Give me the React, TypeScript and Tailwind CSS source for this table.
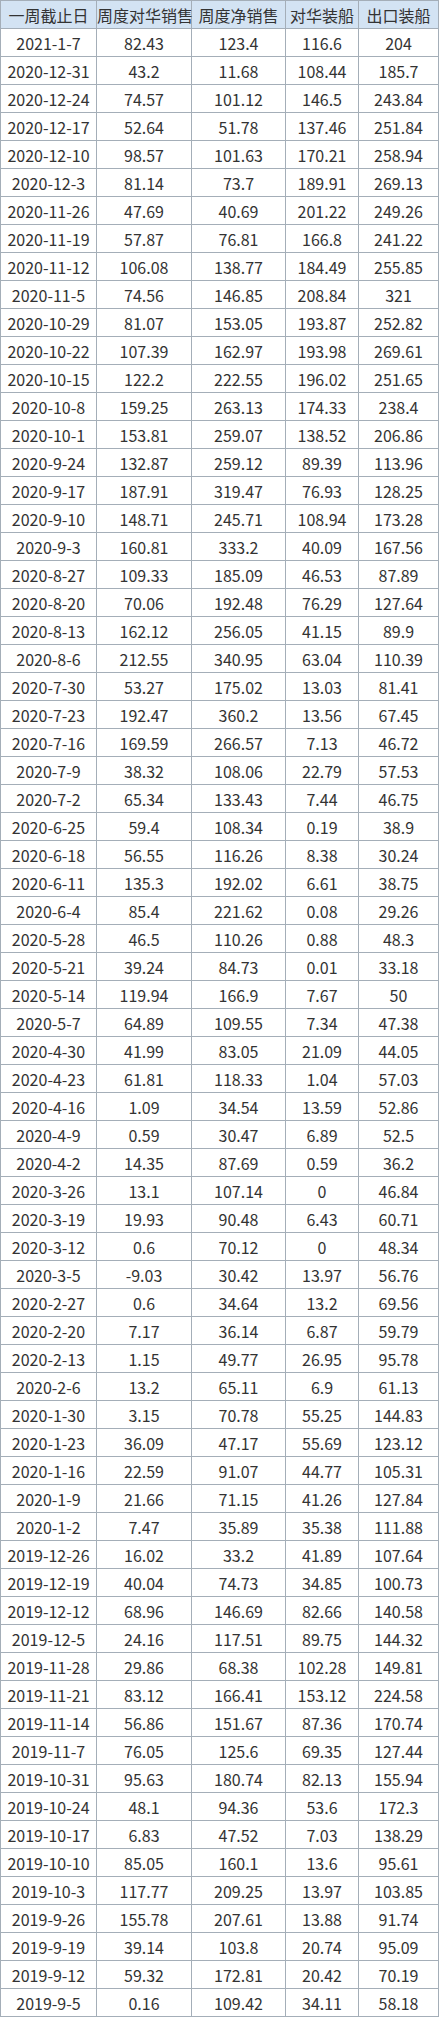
import React from "react";

const raw = `2021-1-7 82.43 123.4 116.6 204
2020-12-31 43.2 11.68 108.44 185.7
2020-12-24 74.57 101.12 146.5 243.84
2020-12-17 52.64 51.78 137.46 251.84
2020-12-10 98.57 101.63 170.21 258.94
2020-12-3 81.14 73.7 189.91 269.13
2020-11-26 47.69 40.69 201.22 249.26
2020-11-19 57.87 76.81 166.8 241.22
2020-11-12 106.08 138.77 184.49 255.85
2020-11-5 74.56 146.85 208.84 321
2020-10-29 81.07 153.05 193.87 252.82
2020-10-22 107.39 162.97 193.98 269.61
2020-10-15 122.2 222.55 196.02 251.65
2020-10-8 159.25 263.13 174.33 238.4
2020-10-1 153.81 259.07 138.52 206.86
2020-9-24 132.87 259.12 89.39 113.96
2020-9-17 187.91 319.47 76.93 128.25
2020-9-10 148.71 245.71 108.94 173.28
2020-9-3 160.81 333.2 40.09 167.56
2020-8-27 109.33 185.09 46.53 87.89
2020-8-20 70.06 192.48 76.29 127.64
2020-8-13 162.12 256.05 41.15 89.9
2020-8-6 212.55 340.95 63.04 110.39
2020-7-30 53.27 175.02 13.03 81.41
2020-7-23 192.47 360.2 13.56 67.45
2020-7-16 169.59 266.57 7.13 46.72
2020-7-9 38.32 108.06 22.79 57.53
2020-7-2 65.34 133.43 7.44 46.75
2020-6-25 59.4 108.34 0.19 38.9
2020-6-18 56.55 116.26 8.38 30.24
2020-6-11 135.3 192.02 6.61 38.75
2020-6-4 85.4 221.62 0.08 29.26
2020-5-28 46.5 110.26 0.88 48.3
2020-5-21 39.24 84.73 0.01 33.18
2020-5-14 119.94 166.9 7.67 50
2020-5-7 64.89 109.55 7.34 47.38
2020-4-30 41.99 83.05 21.09 44.05
2020-4-23 61.81 118.33 1.04 57.03
2020-4-16 1.09 34.54 13.59 52.86
2020-4-9 0.59 30.47 6.89 52.5
2020-4-2 14.35 87.69 0.59 36.2
2020-3-26 13.1 107.14 0 46.84
2020-3-19 19.93 90.48 6.43 60.71
2020-3-12 0.6 70.12 0 48.34
2020-3-5 -9.03 30.42 13.97 56.76
2020-2-27 0.6 34.64 13.2 69.56
2020-2-20 7.17 36.14 6.87 59.79
2020-2-13 1.15 49.77 26.95 95.78
2020-2-6 13.2 65.11 6.9 61.13
2020-1-30 3.15 70.78 55.25 144.83
2020-1-23 36.09 47.17 55.69 123.12
2020-1-16 22.59 91.07 44.77 105.31
2020-1-9 21.66 71.15 41.26 127.84
2020-1-2 7.47 35.89 35.38 111.88
2019-12-26 16.02 33.2 41.89 107.64
2019-12-19 40.04 74.73 34.85 100.73
2019-12-12 68.96 146.69 82.66 140.58
2019-12-5 24.16 117.51 89.75 144.32
2019-11-28 29.86 68.38 102.28 149.81
2019-11-21 83.12 166.41 153.12 224.58
2019-11-14 56.86 151.67 87.36 170.74
2019-11-7 76.05 125.6 69.35 127.44
2019-10-31 95.63 180.74 82.13 155.94
2019-10-24 48.1 94.36 53.6 172.3
2019-10-17 6.83 47.52 7.03 138.29
2019-10-10 85.05 160.1 13.6 95.61
2019-10-3 117.77 209.25 13.97 103.85
2019-9-26 155.78 207.61 13.88 91.74
2019-9-19 39.14 103.8 20.74 95.09
2019-9-12 59.32 172.81 20.42 70.19
2019-9-5 0.16 109.42 34.11 58.18`;

const rows = raw.split("\n").map((l) => l.trim().split(/\s+/));
const headers = ["一周截止日", "周度对华销售", "周度净销售", "对华装船", "出口装船"];

export default function App() {
  return (
    <div className="bg-white w-[439px]" style={{}}>
      <table
        className="border-collapse table-fixed w-[438px] text-[16px] text-[#333333]"
        style={{ fontFamily: '"Noto Sans CJK SC", "Noto Sans", sans-serif' }}
      >
        <colgroup>
          <col className="w-[96px]" />
          <col className="w-[95px]" />
          <col className="w-[94px]" />
          <col className="w-[73px]" />
          <col className="w-[80px]" />
        </colgroup>
        <thead>
          <tr className="h-[28px] bg-[#d3e3f3]">
            {headers.map((h) => (
              <th
                key={h}
                className="border border-[#a4aeb8] p-0 font-normal text-center leading-none whitespace-nowrap"
              >
                {h}
              </th>
            ))}
          </tr>
        </thead>
        <tbody>
          {rows.map((r) => (
            <tr key={r[0]} className="h-[28px]">
              {r.map((c, i) => (
                <td
                  key={i}
                  className="border border-[#a4aeb8] p-0 text-center leading-none whitespace-nowrap"
                >
                  {c}
                </td>
              ))}
            </tr>
          ))}
        </tbody>
      </table>
    </div>
  );
}
